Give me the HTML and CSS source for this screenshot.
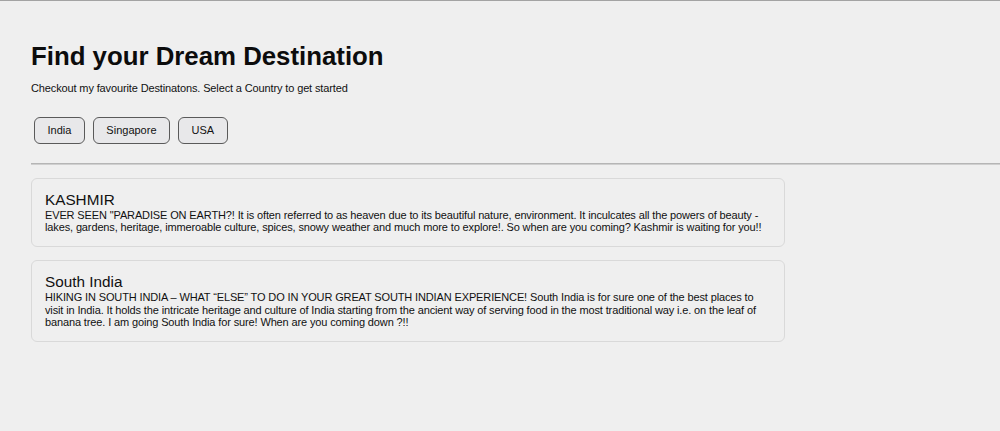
FILE: index.html
```html
<!DOCTYPE html>
<html>
<head>
<meta charset="utf-8">
<link rel="stylesheet" href="styles.css">
</head>
<body>
<main class="page">
  <h1 class="title">Find your Dream Destination</h1>
  <p class="subtitle">Checkout my favourite Destinatons. Select a Country to get started</p>
  <div class="countries">
    <button class="country">India</button>
    <button class="country">Singapore</button>
    <button class="country">USA</button>
  </div>
  <hr class="divider">
  <ul class="places">
    <li class="card">
      <div class="card-title">KASHMIR</div>
      <div class="card-text">EVER SEEN "PARADISE ON EARTH?! It is often referred to as heaven due to its beautiful nature, environment. It inculcates all the powers of beauty - lakes, gardens, heritage, immeroable culture, spices, snowy weather and much more to explore!. So when are you coming? Kashmir is waiting for you!!</div>
    </li>
    <li class="card">
      <div class="card-title">South India</div>
      <div class="card-text">HIKING IN SOUTH INDIA – WHAT “ELSE” TO DO IN YOUR GREAT SOUTH INDIAN EXPERIENCE! South India is for sure one of the best places to visit in India. It holds the intricate heritage and culture of India starting from the ancient way of serving food in the most traditional way i.e. on the leaf of banana tree. I am going South India for sure! When are you coming down ?!!</div>
    </li>
  </ul>
</main>
</body>
</html>
```
FILE: styles.css
```css
html, body {
  margin: 0;
  padding: 0;
  background: #efefef;
}
body {
  border-top: 1px solid #a3a3a3;
  font-family: "Liberation Sans", Arial, sans-serif;
  color: #111;
  height: 430px;
  overflow: hidden;
}
.page {
  padding: 40px 0 0 31px;
}
.title {
  margin: 0;
  font-size: 25.8px;
  font-weight: bold;
  line-height: 30px;
  color: #0c0c0c;
}
.subtitle {
  margin: 11px 0 0;
  font-size: 11px;
  line-height: 12.65px;
  letter-spacing: -0.13px;
}
.countries {
  display: flex;
  gap: 8px;
  margin-top: 22px;
  padding-left: 3px;
}
.country {
  font-family: "Liberation Sans", Arial, sans-serif;
  font-size: 11px;
  line-height: 13px;
  padding: 6px 12.5px;
  border: 1px solid #5a5a5a;
  border-radius: 6px;
  background: #e8e8ea;
  color: #111;
}
.divider {
  margin: 19px 0 0;
  border: 0;
  border-top: 1px solid #b5b5b5;
  border-bottom: 1px solid #cfcfcf;
  height: 0;
}
.places {
  list-style: none;
  margin: 13px 0 0;
  padding: 0;
  display: flex;
  flex-direction: column;
  gap: 13px;
}
.card {
  width: 754px;
  box-sizing: border-box;
  border: 1px solid #d9d9d9;
  border-radius: 6px;
  padding: 12px 13px;
}
.card-title {
  font-size: 15.3px;
  line-height: 18px;
}
.card-text {
  font-size: 11px;
  line-height: 12.65px;
  letter-spacing: -0.13px;
}
```
